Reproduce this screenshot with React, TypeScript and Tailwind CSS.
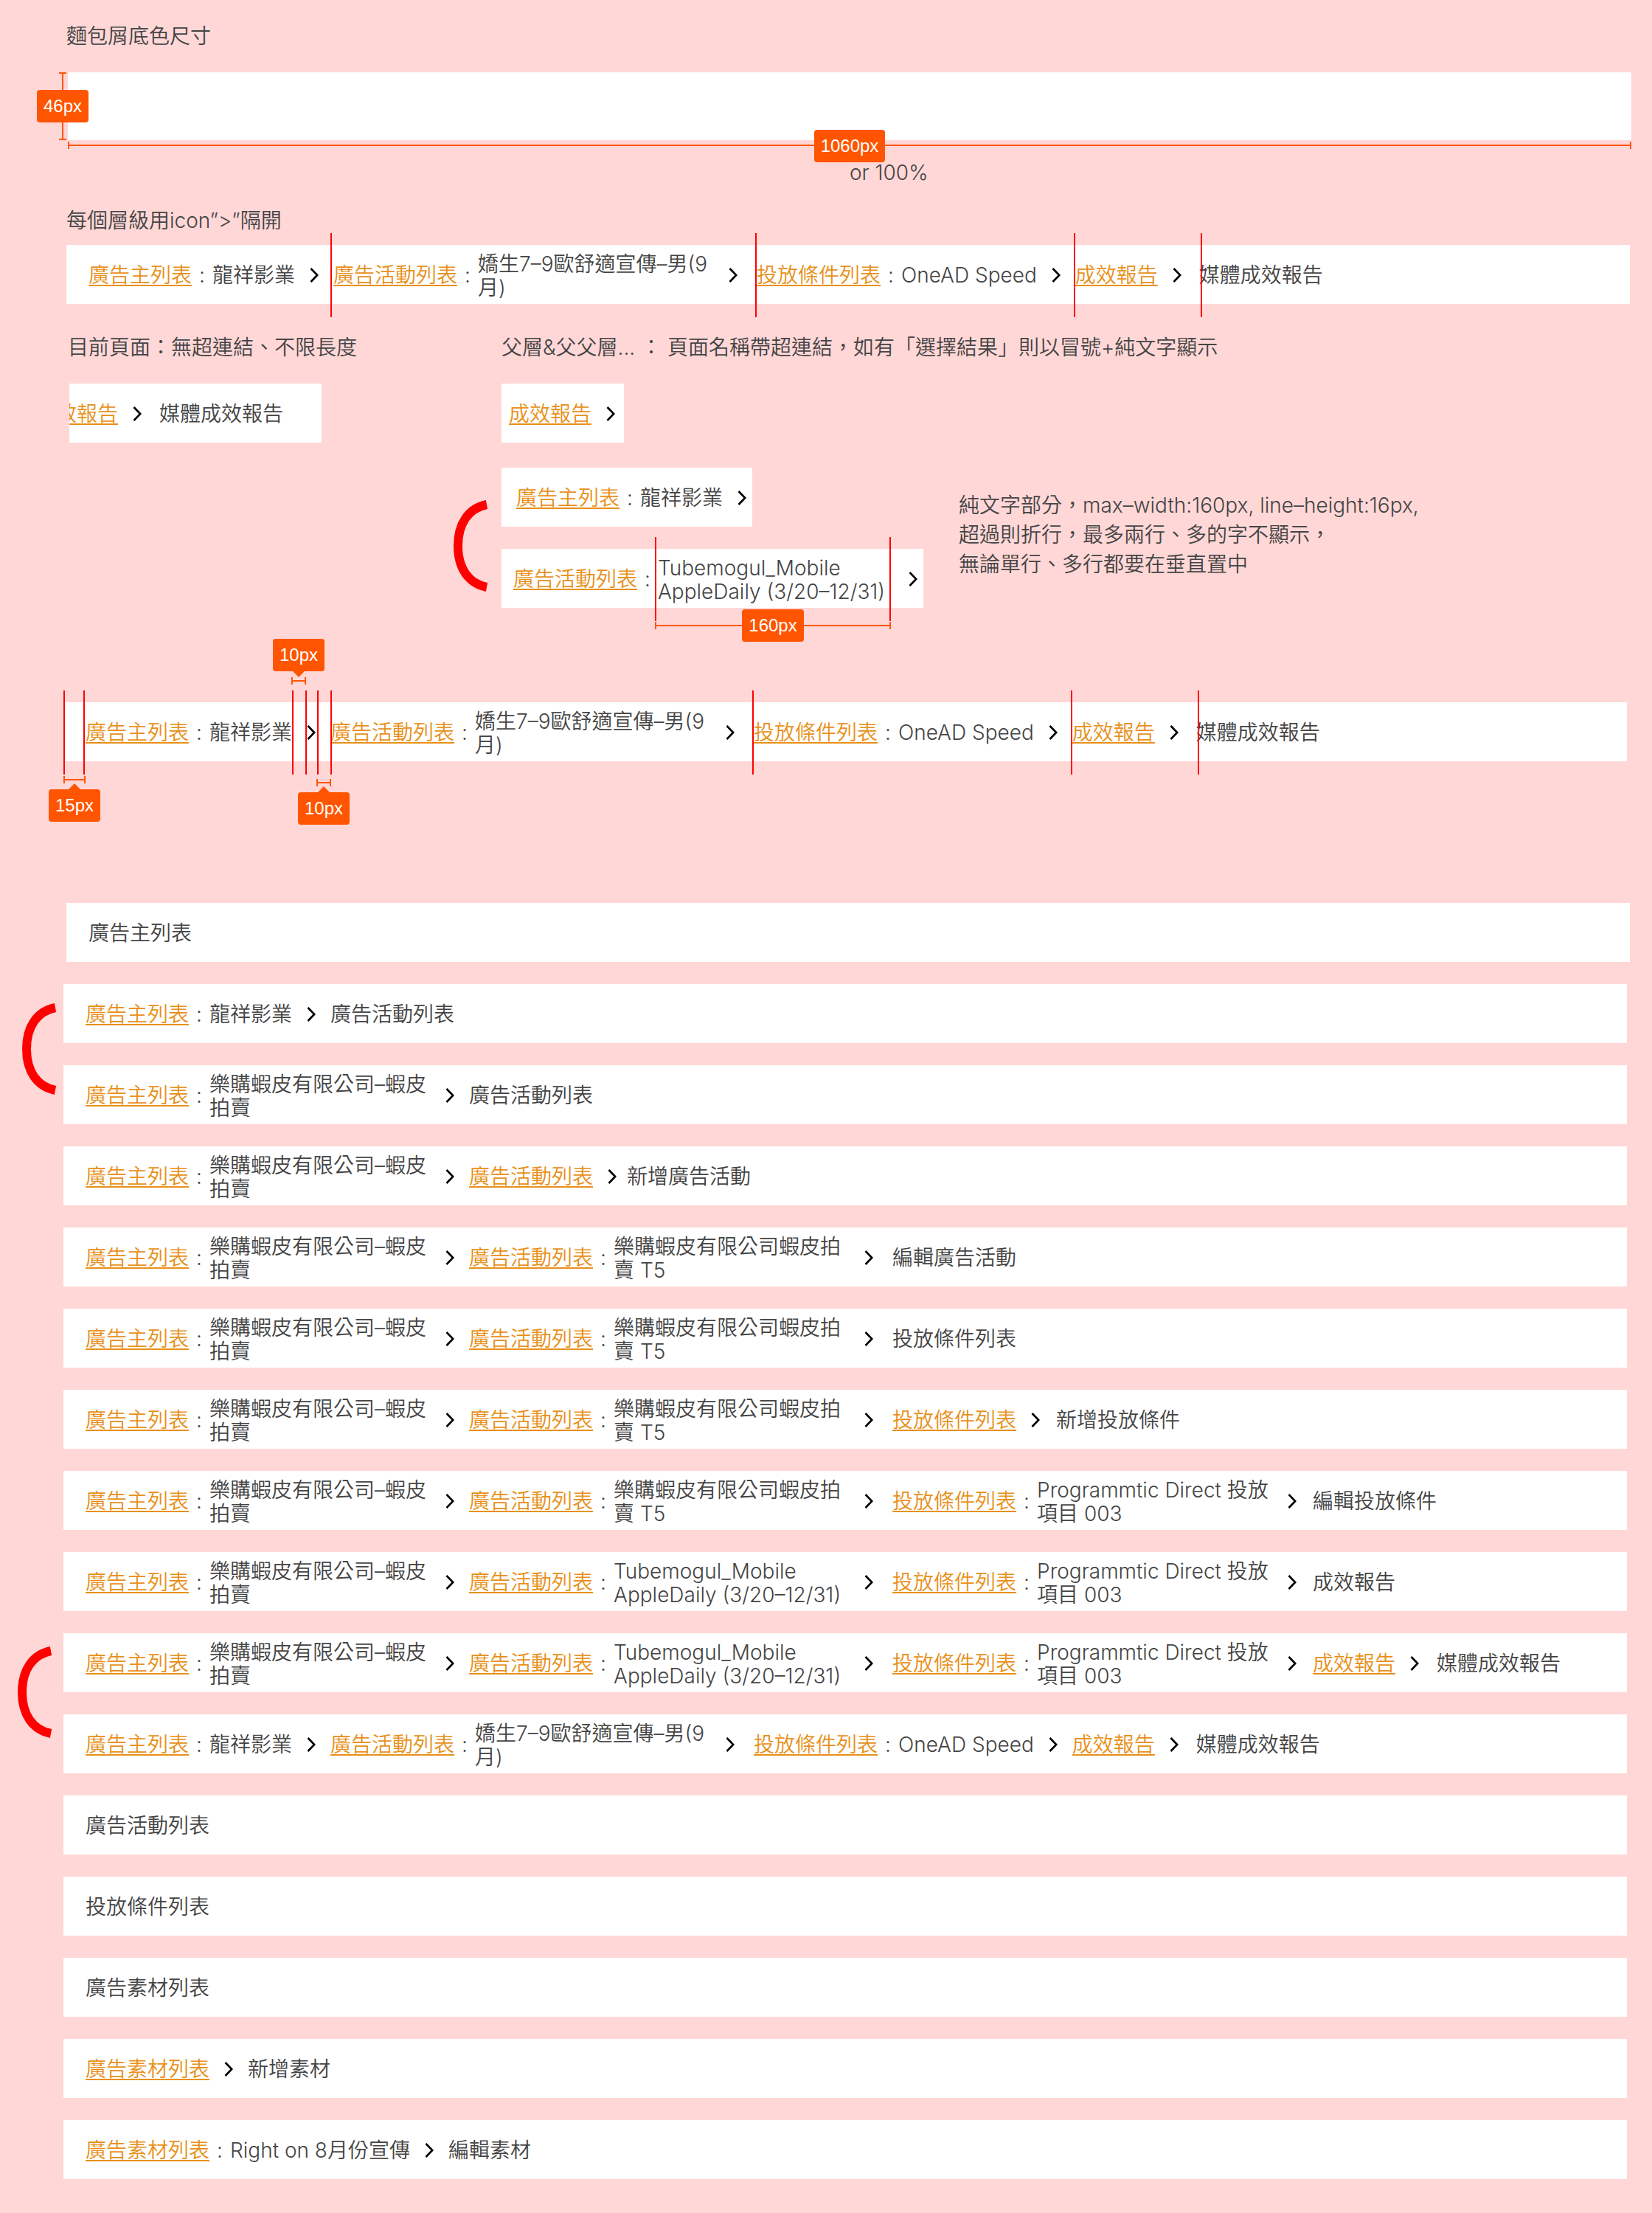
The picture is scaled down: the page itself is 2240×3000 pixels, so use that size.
import type { ReactNode } from "react";

type Crumb = {
  label: string;
  /** Plain-text selection shown after the colon. */
  value?: string;
  /** Width of the value column when the value may wrap onto two lines. */
  wrap?: "w-[300px]" | "w-[320px]";
  /** Space that follows the chevron. */
  after?: string;
  current?: boolean;
};

function Chevron({ className = "" }: { className?: string }) {
  return (
    <svg
      viewBox="0 0 12 20"
      className={`ml-5 h-5 w-3 shrink-0 ${className}`}
      fill="none"
      stroke="#000"
      strokeWidth="2.6"
      aria-hidden="true"
    >
      <path d="M1.5 1 L10.2 10 L1.5 19" />
    </svg>
  );
}

function Crumbs({ items, className = "" }: { items: Crumb[]; className?: string }) {
  return (
    <nav aria-label="麵包屑" className={className}>
      <ol className="flex h-20 items-center pt-[2px] whitespace-nowrap">
        {items.map((c, i) => (
          <li key={i} className="flex shrink-0 items-center">
            {c.current ? (
              <span aria-current="page">{c.label}</span>
            ) : (
              <a
                href="#"
                className="text-[#e8901a] underline decoration-2 underline-offset-3 [text-decoration-skip-ink:none]"
              >
                {c.label}
              </a>
            )}
            {c.value && <span className="w-7 text-center">:</span>}
            {c.value &&
              (c.wrap === "w-[300px]" ? (
                <span className="line-clamp-2 w-[300px] pt-[2px] whitespace-normal">{c.value}</span>
              ) : c.wrap === "w-[320px]" ? (
                <span className="line-clamp-2 w-[320px] pt-[2px] whitespace-normal">{c.value}</span>
              ) : (
                <span>{c.value}</span>
              ))}
            {!c.current && <Chevron className={c.after ?? "mr-5"} />}
          </li>
        ))}
      </ol>
    </nav>
  );
}

function Guide({ className }: { className: string }) {
  return <span className={`absolute -top-4 -bottom-[18px] w-[2px] bg-[#ff0000] ${className}`} />;
}

function Badge({ children, className = "" }: { children: ReactNode; className?: string }) {
  return (
    <span
      className={`flex h-11 items-center rounded-[4px] bg-[#ff5500] px-[9px] font-['Liberation_Sans',sans-serif] text-[24px] leading-none text-white ${className}`}
    >
      {children}
    </span>
  );
}

/** Horizontal measure: a line with a cap at either end. */
function Measure({ className = "" }: { className?: string }) {
  return (
    <span className={`flex h-[10px] items-center border-x-2 border-[#ff5500] ${className}`}>
      <span className="h-[2px] w-full bg-[#ff5500]" />
    </span>
  );
}

function Pointer({ up = false }: { up?: boolean }) {
  return (
    <svg viewBox="0 0 16 8" className="h-2 w-4" fill="#ff5500" aria-hidden="true">
      <path d={up ? "M8 0 L16 8 H0 Z" : "M0 0 H16 L8 8 Z"} />
    </svg>
  );
}

function Bracket({ className }: { className: string }) {
  return (
    <svg
      viewBox="0 0 48 124"
      className={`absolute h-[124px] w-12 ${className}`}
      fill="none"
      stroke="#ff0000"
      strokeWidth="12"
      aria-hidden="true"
    >
      <path d="M45 6 C20 11 6 32 6 62 C6 92 20 113 45 118" />
    </svg>
  );
}

const advertiser: Crumb = { label: "廣告主列表", value: "龍祥影業" };
const shopee: Crumb = { label: "廣告主列表", value: "樂購蝦皮有限公司–蝦皮拍賣", wrap: "w-[300px]" };
const campaignT5: Crumb = {
  label: "廣告活動列表",
  value: "樂購蝦皮有限公司蝦皮拍賣 T5",
  wrap: "w-[320px]",
  after: "mr-[26px]",
};
const tubemogul: Crumb = { ...campaignT5, value: "Tubemogul_Mobile AppleDaily (3/20–12/31)" };
const programmatic: Crumb = {
  label: "投放條件列表",
  value: "Programmtic Direct 投放項目 003",
  wrap: "w-[320px]",
  after: "mr-[22px]",
};
const mediaReport: Crumb = { label: "媒體成效報告", current: true };

const fullTrail: Crumb[] = [
  advertiser,
  { label: "廣告活動列表", value: "嬌生7–9歐舒適宣傳–男(9月)", wrap: "w-[320px]", after: "mr-[26px]" },
  { label: "投放條件列表", value: "OneAD Speed", after: "mr-5" },
  { label: "成效報告", after: "mr-6" },
  mediaReport,
];

const page = (label: string): Crumb => ({ label, current: true });

const examples: Crumb[][] = [
  [advertiser, page("廣告活動列表")],
  [shopee, page("廣告活動列表")],
  [shopee, { label: "廣告活動列表", after: "mr-[14px]" }, page("新增廣告活動")],
  [shopee, campaignT5, page("編輯廣告活動")],
  [shopee, campaignT5, page("投放條件列表")],
  [shopee, campaignT5, { label: "投放條件列表", after: "mr-[22px]" }, page("新增投放條件")],
  [shopee, campaignT5, programmatic, page("編輯投放條件")],
  [shopee, tubemogul, programmatic, page("成效報告")],
  [shopee, tubemogul, programmatic, { label: "成效報告", after: "mr-6" }, mediaReport],
  fullTrail,
  [page("廣告活動列表")],
  [page("投放條件列表")],
  [page("廣告素材列表")],
  [{ label: "廣告素材列表" }, page("新增素材")],
  [{ label: "廣告素材列表", value: "Right on 8月份宣傳" }, page("編輯素材")],
];

export default function App() {
  return (
    <main
      lang="zh-Hant"
      className="min-h-screen overflow-hidden bg-[#ffd7d7] pt-[29px] pb-[46px] font-[Inter,'Noto_Sans_CJK_TC',sans-serif] text-[28px] leading-8 [font-weight:350] text-[#444444]"
    >
      <section className="mr-7 ml-[92px]">
        <h2 className="-ml-[2px] leading-10 [font-weight:350]">麵包屑底色尺寸</h2>
        <div className="relative mt-[29px] h-[92px] bg-white">
          <div className="absolute inset-y-0 right-full flex w-[42px] items-center">
            <span className="absolute inset-y-0 left-[30px] w-[10px] border-y-2 border-[#ff5500]" />
            <span className="absolute inset-y-0 left-[34px] w-[2px] bg-[#ff5500]" />
            <Badge className="relative">46px</Badge>
          </div>
          <div className="absolute inset-x-0 top-full mt-[2px]">
            <Measure />
          </div>
          <div className="absolute inset-x-0 top-full -mt-[14px] flex justify-center">
            <Badge>1060px</Badge>
          </div>
        </div>
        <p className="mt-7 ml-[50%]">or 100%</p>
      </section>

      <section className="mr-[30px] ml-[90px]">
        <h2 className="mt-[29px] leading-10 [font-weight:350]">每個層級用icon”&gt;”隔開</h2>
        <div className="relative mt-[13px] bg-white">
          <Crumbs items={fullTrail} className="pl-[30px]" />
          <Guide className="left-[358px]" />
          <Guide className="left-[934px]" />
          <Guide className="left-[1366px]" />
          <Guide className="left-[1538px]" />
        </div>
      </section>

      <div className="mt-[39px] ml-[94px] flex">
        <section className="w-[586px] shrink-0">
          <h2 className="-ml-[2px] leading-10 [font-weight:350]">目前頁面：無超連結、不限長度</h2>
          <div className="mt-[29px] w-[342px] overflow-hidden bg-white">
            <Crumbs items={[{ label: "成效報告", after: "mr-6" }, mediaReport]} className="-ml-[46px]" />
          </div>
        </section>
        <section>
          <h2 className="leading-10 [font-weight:350]">父層&amp;父父層... ： 頁面名稱帶超連結，如有「選擇結果」則以冒號+純文字顯示</h2>
          <div className="mt-[29px] w-[166px] overflow-hidden bg-white">
            <Crumbs items={[{ label: "成效報告" }]} className="pl-[10px]" />
          </div>
          <div className="mt-[34px] flex items-start gap-12">
            <div className="relative flex w-[572px] flex-col gap-[30px]">
              <div className="w-[340px] overflow-hidden bg-white">
                <Crumbs items={[advertiser]} className="pl-5" />
              </div>
              <div className="relative bg-white">
                <Crumbs items={[{ ...tubemogul, after: "mr-0" }]} className="pl-4" />
                <Guide className="left-[208px]" />
                <Guide className="left-[526px]" />
                <div className="absolute top-full left-[208px] mt-[2px] flex w-80 items-center justify-center">
                  <Measure className="absolute inset-x-0" />
                  <Badge className="relative">160px</Badge>
                </div>
              </div>
              <Bracket className="top-11 -left-[65px]" />
            </div>
            <p className="pt-[31px] leading-10">
              純文字部分，max–width:160px, line–height:16px,
              <br />
              超過則折行，最多兩行、多的字不顯示，
              <br />
              無論單行、多行都要在垂直置中
            </p>
          </div>
        </section>
      </div>

      <section className="relative mt-32 mr-[34px] ml-[86px] bg-white">
        <Crumbs items={fullTrail} className="pl-[30px]" />
        <Guide className="left-0" />
        <Guide className="left-[27px]" />
        <Guide className="left-[310px]" />
        <Guide className="left-[328px]" />
        <Guide className="left-[344px]" />
        <Guide className="left-[362px]" />
        <Guide className="left-[934px]" />
        <Guide className="left-[1366px]" />
        <Guide className="left-[1538px]" />
        <div className="absolute bottom-full left-[284px] mb-6 flex w-[70px] flex-col items-center">
          <Badge>10px</Badge>
          <Pointer />
          <Measure className="w-5" />
        </div>
        <div className="absolute top-full -left-5 mt-5 flex w-[70px] flex-col items-center">
          <Measure className="w-[30px]" />
          <Pointer up />
          <Badge>15px</Badge>
        </div>
        <div className="absolute top-full left-[318px] mt-6 flex w-[70px] flex-col items-center">
          <Measure className="w-5" />
          <Pointer up />
          <Badge>10px</Badge>
        </div>
      </section>

      <section className="mt-48 flex flex-col gap-[30px]">
        <div className="mr-[30px] ml-[90px] bg-white">
          <Crumbs items={[page("廣告主列表")]} className="pl-[30px]" />
        </div>
        {examples.map((items, i) => (
          <div key={i} className="relative mr-[34px] ml-[86px] bg-white">
            <Crumbs items={items} className="pl-[30px]" />
            {i === 0 && <Bracket className="top-[26px] -left-14" />}
            {i === 8 && <Bracket className="top-[18px] -left-[62px]" />}
          </div>
        ))}
      </section>
    </main>
  );
}
